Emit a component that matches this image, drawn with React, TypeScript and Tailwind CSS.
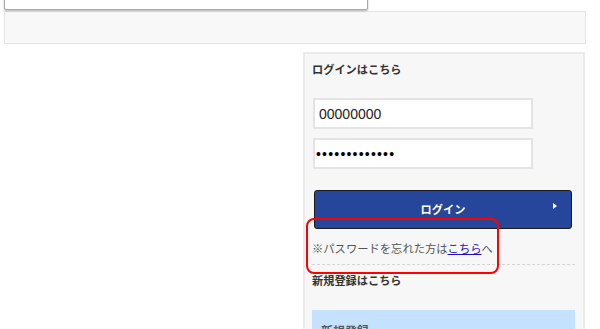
const jp = "font-['Meiryo','Noto_Sans_CJK_JP',sans-serif]";

const App = () => {
  return (
    <div className={`relative h-[329px] w-[600px] overflow-hidden bg-white ${jp}`}>
      {/* dropdown hanging over the top */}
      <div className="absolute left-[4px] top-[-12px] h-[22px] w-[364px] rounded-b-[2px] border border-[#a9a9a9] bg-white shadow-[0_1px_2px_rgba(0,0,0,0.3)]" />

      <div className="pl-[4px] pt-[11px]">
        <div className="h-[33px] w-[582px] border border-[#e6e6e6] bg-[#f8f8f8]" />

        <div className="mt-[8px] flex">
          <div className="w-[299px]" />
          <aside className="h-[300px] w-[282px] border-2 border-[#ebebeb] bg-[#f7f7f7] px-[7px] pt-[7px]">
            <h2 className="text-[11.2px] font-bold leading-[16px] text-[#333]">ログインはこちら</h2>

            <div className="ml-[1px] mt-[21px] flex flex-col gap-[9px]">
              <input
                type="text"
                defaultValue="00000000"
                readOnly
                className="h-[31px] w-[220px] border-2 border-[#e4e4e4] bg-white px-[4px] font-['Liberation_Sans',sans-serif] text-[14px] text-[#222] outline-none"
              />
              <input
                type="password"
                defaultValue="1234567890123"
                readOnly
                className="h-[31px] w-[220px] border-2 border-[#e4e4e4] bg-white px-[1px] font-['Liberation_Sans',sans-serif] text-[14px] tracking-[1.2px] text-black outline-none"
              />
            </div>

            <button
              type="button"
              className="relative ml-[2px] mt-[21px] flex h-[39px] w-[258px] items-center justify-center rounded-[3px] border-[1.5px] border-[#1a1a1a] bg-[#25469b] text-[11.2px] font-bold text-white"
            >
              ログイン
              <svg viewBox="0 0 4 6" className="absolute left-[238px] top-[12px] h-[6px] w-[4px]">
                <path d="M0 0 L4 3 L0 6 Z" fill="white" />
              </svg>
            </button>

            <p className="mt-[11px] text-[11.3px] leading-[16px] text-[#555]">
              ※パスワードを忘れた方は
              <a href="#" className="text-[#1a0dcc] underline">
                こちら
              </a>
              へ
            </p>

            <div className="mt-[8px] w-[263px] border-t border-dashed border-[#d4d4d4]" />

            <h2 className="mt-[7px] text-[11.2px] font-bold leading-[16px] text-[#333]">新規登録はこちら</h2>

            <div className="mt-[22px] h-[40px] w-[263px] bg-[#c4e1ff] px-[9px] pt-[7px]">
              <span className="text-[12px] font-bold leading-[16px] text-[#555]">新規登録</span>
            </div>
          </aside>
        </div>
      </div>

      {/* red annotation */}
      <div className="absolute left-[306px] top-[218px] h-[56px] w-[193px] rounded-[8px] border-[2.5px] border-[#ff0000]" />
    </div>
  );
};

export default App;
